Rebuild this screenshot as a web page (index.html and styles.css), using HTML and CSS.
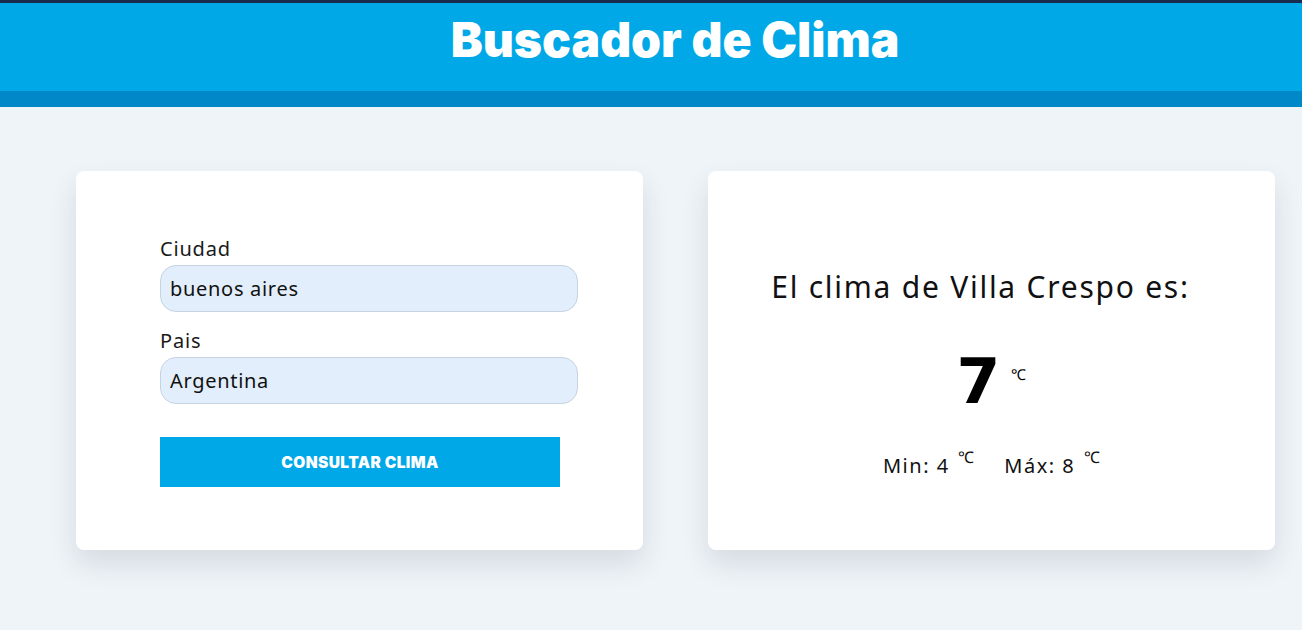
FILE: index.html
```html
<!DOCTYPE html>
<html lang="es">
<head>
<meta charset="utf-8">
<title>Buscador de Clima</title>
<link rel="stylesheet" href="styles.css">
</head>
<body>
<header class="header">
  <h1 class="title">Buscador de Clima</h1>
</header>
<main class="main">
  <section class="card form-card">
    <form class="form">
      <label class="label" for="ciudad">Ciudad</label>
      <input class="input" id="ciudad" type="text" value="buenos aires">
      <label class="label" for="pais">Pais</label>
      <input class="input" id="pais" type="text" value="Argentina">
      <button class="btn" type="button">Consultar clima</button>
    </form>
  </section>
  <section class="card result-card">
    <h2 class="result-title">El clima de Villa Crespo es:</h2>
    <p class="temp">7 <span class="unit">℃</span></p>
    <p class="range"><span>Min: 4 <sup class="unit-sm">℃</sup></span><span>Máx: 8 <sup class="unit-sm">℃</sup></span></p>
  </section>
</main>
</body>
</html>
```
FILE: styles.css
```css
* { box-sizing: border-box; }
html, body { margin: 0; height: 100%; }
body {
  background: #eff4f8;
  font-family: "Noto Sans", "Open Sans", sans-serif;
  color: #111;
  overflow: hidden;
}
.header {
  border-top: 3px solid #1a2b4d;
  background: #00a8e8;
  border-bottom: 16px solid #0088c8;
  height: 107px;
  display: flex;
  justify-content: center;
  padding-left: 48px;
}
.title {
  margin: 10px 0 0 0;
  font-family: Inter, "Liberation Sans", sans-serif;
  font-weight: 900;
  font-size: 48px;
  letter-spacing: 0;
  line-height: 54px;
  color: #fff;
}
.main {
  display: grid;
  grid-template-columns: 567px 567px;
  column-gap: 65px;
  padding: 64px 0 0 76px;
}
.card {
  background: #fff;
  border-radius: 8px;
  height: 379px;
  box-shadow: 0 14px 28px rgba(30, 45, 70, 0.12);
}
.form-card { padding: 68px 84px 0 84px; }
.form { display: flex; flex-direction: column; align-items: flex-start; }
.label {
  font-size: 20px;
  line-height: 20px;
  letter-spacing: 0.8px;
  margin-bottom: 6px;
  color: #1a1a1a;
}
.input {
  width: 418px;
  height: 47px;
  margin: 0 0 19px 0;
  border: 1px solid #c6d3e3;
  border-radius: 16px;
  background: #e2eefc;
  padding: 0 9px;
  font-family: "Noto Sans", "Open Sans", sans-serif;
  font-size: 20px;
  letter-spacing: 0.7px;
  color: #111;
}
.btn {
  margin-top: 14px;
  width: 400px;
  height: 50px;
  border: 0;
  background: #00a8e8;
  color: #fff;
  font-family: Inter, "Liberation Sans", sans-serif;
  font-weight: 900;
  font-size: 15.5px;
  letter-spacing: 0.4px;
  text-transform: uppercase;
}
.result-card {
  display: flex;
  flex-direction: column;
  align-items: center;
  padding-top: 96px;
}
.result-title {
  margin: 0;
  padding-right: 22px;
  font-weight: 400;
  font-size: 30px;
  line-height: 40px;
  letter-spacing: 1.75px;
}
.temp {
  margin: 40px 0 0 0;
  font-family: "DejaVu Sans", sans-serif;
  font-weight: 900;
  font-size: 63px;
  line-height: 70px;
  display: flex;
  align-items: flex-start;
  color: #000;
}
.unit {
  font-family: "Liberation Serif", serif;
  font-weight: 400;
  font-size: 15px;
  line-height: 1;
  margin: 21px 0 0 11px;
}
.range {
  margin: 29px 0 0 0;
  font-size: 20px;
  letter-spacing: 1.5px;
  display: flex;
  gap: 30px;
}
.unit-sm {
  font-family: "Liberation Serif", serif;
  font-size: 16px;
  letter-spacing: 0;
  vertical-align: 10px;
  margin-left: 2px;
}
```
